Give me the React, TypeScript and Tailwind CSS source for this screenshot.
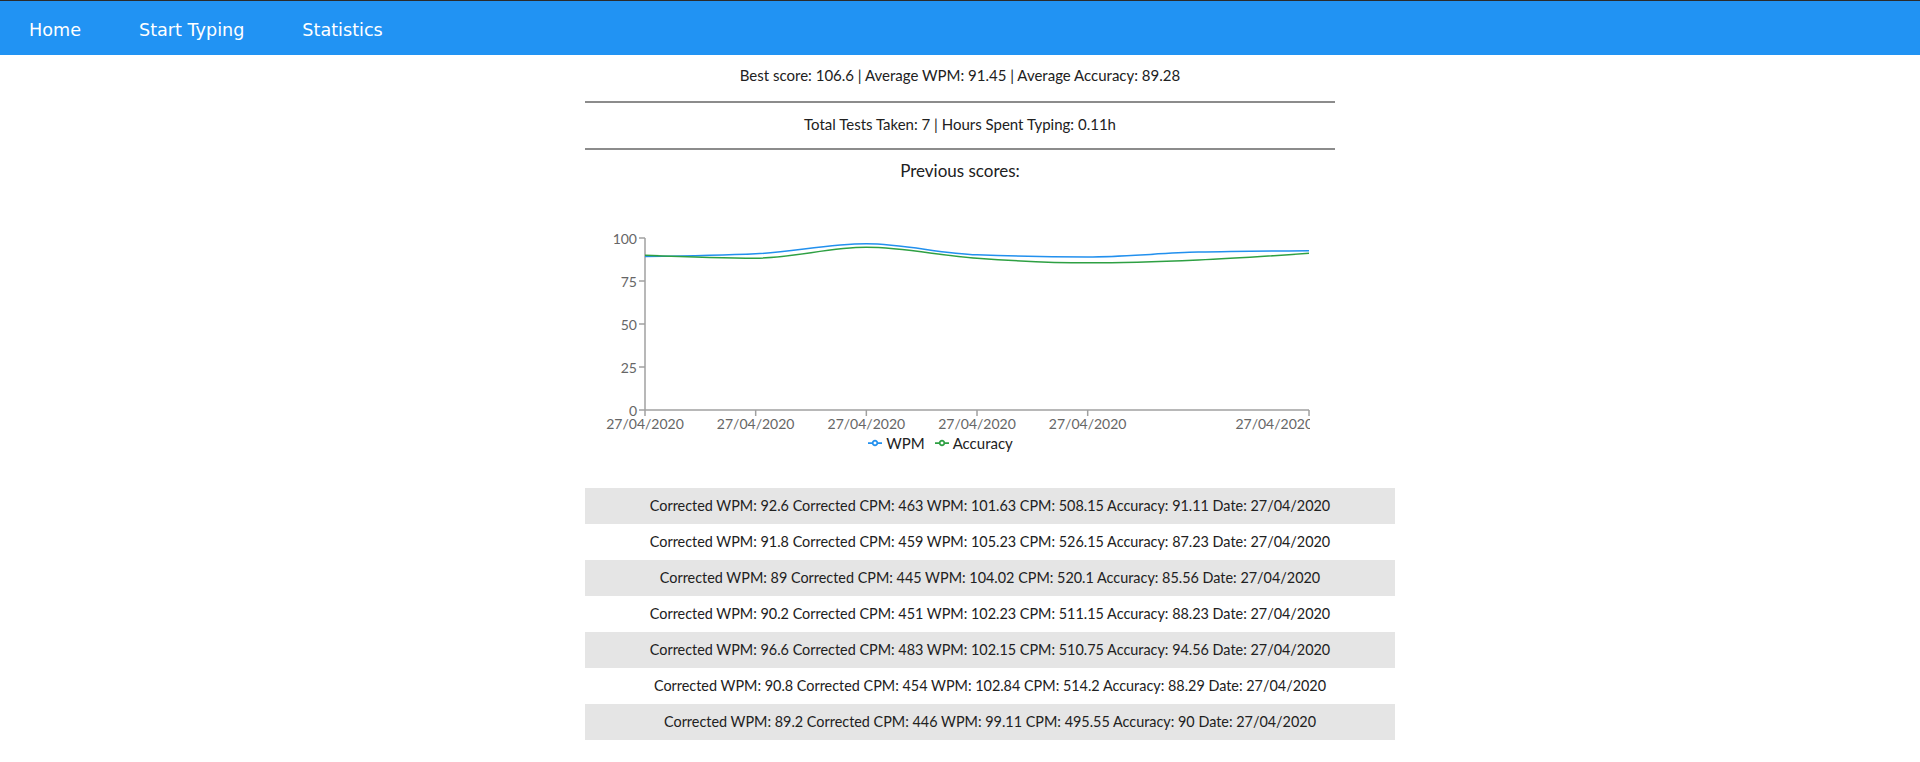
const rows = [
  { cwpm: "92.6", ccpm: "463", wpm: "101.63", cpm: "508.15", acc: "91.11", date: "27/04/2020" },
  { cwpm: "91.8", ccpm: "459", wpm: "105.23", cpm: "526.15", acc: "87.23", date: "27/04/2020" },
  { cwpm: "89", ccpm: "445", wpm: "104.02", cpm: "520.1", acc: "85.56", date: "27/04/2020" },
  { cwpm: "90.2", ccpm: "451", wpm: "102.23", cpm: "511.15", acc: "88.23", date: "27/04/2020" },
  { cwpm: "96.6", ccpm: "483", wpm: "102.15", cpm: "510.75", acc: "94.56", date: "27/04/2020" },
  { cwpm: "90.8", ccpm: "454", wpm: "102.84", cpm: "514.2", acc: "88.29", date: "27/04/2020" },
  { cwpm: "89.2", ccpm: "446", wpm: "99.11", cpm: "495.55", acc: "90", date: "27/04/2020" },
];

// chart shows oldest first
const series = [...rows].reverse();

const X0 = 60;
const STEP = 110.67;
const Y0 = 227;
const SCALE = 1.72;

type Pt = [number, number];

function slope3(p0: Pt, p1: Pt, p2: Pt) {
  const h0 = p1[0] - p0[0];
  const h1 = p2[0] - p1[0];
  const s0 = (p1[1] - p0[1]) / h0;
  const s1 = (p2[1] - p1[1]) / h1;
  const p = (s0 * h1 + s1 * h0) / (h0 + h1);
  return (Math.sign(s0) + Math.sign(s1)) * Math.min(Math.abs(s0), Math.abs(s1), 0.5 * Math.abs(p)) || 0;
}

// same curve as d3 curveMonotoneX
function monotone(pts: Pt[]) {
  const n = pts.length;
  const t: number[] = new Array(n).fill(0);
  for (let i = 1; i < n - 1; i++) t[i] = slope3(pts[i - 1], pts[i], pts[i + 1]);
  const d0 = (pts[1][1] - pts[0][1]) / (pts[1][0] - pts[0][0]);
  t[0] = (3 * d0 - t[1]) / 2;
  const dl = (pts[n - 1][1] - pts[n - 2][1]) / (pts[n - 1][0] - pts[n - 2][0]);
  t[n - 1] = (3 * dl - t[n - 2]) / 2;
  let d = `M${pts[0][0]},${pts[0][1]}`;
  for (let i = 0; i < n - 1; i++) {
    const [x0, y0] = pts[i];
    const [x1, y1] = pts[i + 1];
    const dx = (x1 - x0) / 3;
    d += `C${x0 + dx},${y0 + dx * t[i]},${x1 - dx},${y1 - dx * t[i + 1]},${x1},${y1}`;
  }
  return d;
}

const toPts = (vals: number[]): Pt[] => vals.map((v, i) => [X0 + i * STEP, Y0 - v * SCALE]);

const wpmPath = monotone(toPts(series.map((r) => parseFloat(r.cwpm))));
const accPath = monotone(toPts(series.map((r) => parseFloat(r.acc))));

const BLUE = "#2290ee";
const GREEN = "#2ea043";

function LegendIcon({ color }: { color: string }) {
  return (
    <svg width="14" height="14" viewBox="0 0 32 32" className="mr-1">
      <path
        strokeWidth="4"
        fill="none"
        stroke={color}
        d="M0,16h10.67A5.33,5.33,0,1,1,21.33,16H32M21.33,16A5.33,5.33,0,1,1,10.67,16"
      />
    </svg>
  );
}

function Chart() {
  const yTicks = [0, 25, 50, 75, 100];
  const xTicks = [0, 1, 2, 3, 4, 6];
  return (
    <div>
      <svg width="725" height="250" className="block overflow-hidden">
        <g stroke="#a0a0a0" strokeWidth="1.5">
          <line x1={X0} y1={Y0 - 100 * SCALE} x2={X0} y2={Y0} />
          <line x1={X0} y1={Y0} x2={X0 + 6 * STEP} y2={Y0} />
          {yTicks.map((v) => (
            <line key={v} x1={X0 - 6} x2={X0} y1={Y0 - v * SCALE} y2={Y0 - v * SCALE} />
          ))}
          {xTicks.map((i) => (
            <line key={i} x1={X0 + i * STEP} x2={X0 + i * STEP} y1={Y0} y2={Y0 + 6} />
          ))}
        </g>
        <g fill="#666" fontSize="14" fontFamily="Lato, sans-serif">
          {yTicks.map((v) => (
            <text key={v} x={X0 - 8} y={Y0 - v * SCALE} textAnchor="end" dominantBaseline="central">
              {v}
            </text>
          ))}
          {xTicks.map((i) =>
            i === 6 ? (
              <text key={i} x={X0 + i * STEP + 4} y={Y0 + 19} textAnchor="end">
                27/04/2020
              </text>
            ) : (
              <text key={i} x={X0 + i * STEP} y={Y0 + 19} textAnchor="middle">
                27/04/2020
              </text>
            ),
          )}
        </g>
        <path d={wpmPath} fill="none" stroke={BLUE} strokeWidth="1.5" />
        <path d={accPath} fill="none" stroke={GREEN} strokeWidth="1.5" />
      </svg>
      <div className="flex h-5 w-[725px] items-center justify-center pr-[14px] text-[15px] leading-5 text-[#222]">
        <span className="mr-2.5 flex items-center">
          <LegendIcon color={BLUE} />
          WPM
        </span>
        <span className="flex items-center">
          <LegendIcon color={GREEN} />
          Accuracy
        </span>
      </div>
    </div>
  );
}

export default function App() {
  return (
    <div className="min-h-screen bg-white text-[#212121]" style={{ fontFamily: "Lato, sans-serif" }}>
      <nav
        className="flex h-[55px] border-t border-[#2b2b2b] bg-[#2193f3] pt-1 text-[17.6px] text-white"
        style={{ fontFamily: "'DejaVu Sans', Verdana, sans-serif" }}
      >
        <a className="flex items-center px-[29px]">Home</a>
        <a className="flex items-center px-[29px]">Start Typing</a>
        <a className="flex items-center px-[29px]">Statistics</a>
      </nav>

      <div className="mx-auto w-[750px]">
        <p className="h-[46px] pt-[10px] text-center text-[15px] leading-[20px]">
          Best score: 106.6 | Average WPM: 91.45 | Average Accuracy: 89.28
        </p>
        <hr className="border-t-2 border-[#8c8c8c]" />
        <p className="h-[45px] pt-[11px] text-center text-[15px] leading-[20px]">
          Total Tests Taken: 7 | Hours Spent Typing: 0.11h
        </p>
        <hr className="border-t-2 border-[#8c8c8c]" />
        <p className="h-[33px] pt-[10px] text-center text-[17px] leading-[22px]">Previous scores:</p>

        <Chart />

        <div className="mt-[35px] w-[810px]">
          {rows.map((r, i) => (
            <div
              key={i}
              className={`flex h-9 items-center justify-center text-[14.4px] ${i % 2 === 0 ? "bg-[#e5e5e5]" : "bg-white"}`}
            >
              Corrected WPM: {r.cwpm} Corrected CPM: {r.ccpm} WPM: {r.wpm} CPM: {r.cpm} Accuracy: {r.acc} Date:{" "}
              {r.date}
            </div>
          ))}
        </div>
      </div>
    </div>
  );
}
